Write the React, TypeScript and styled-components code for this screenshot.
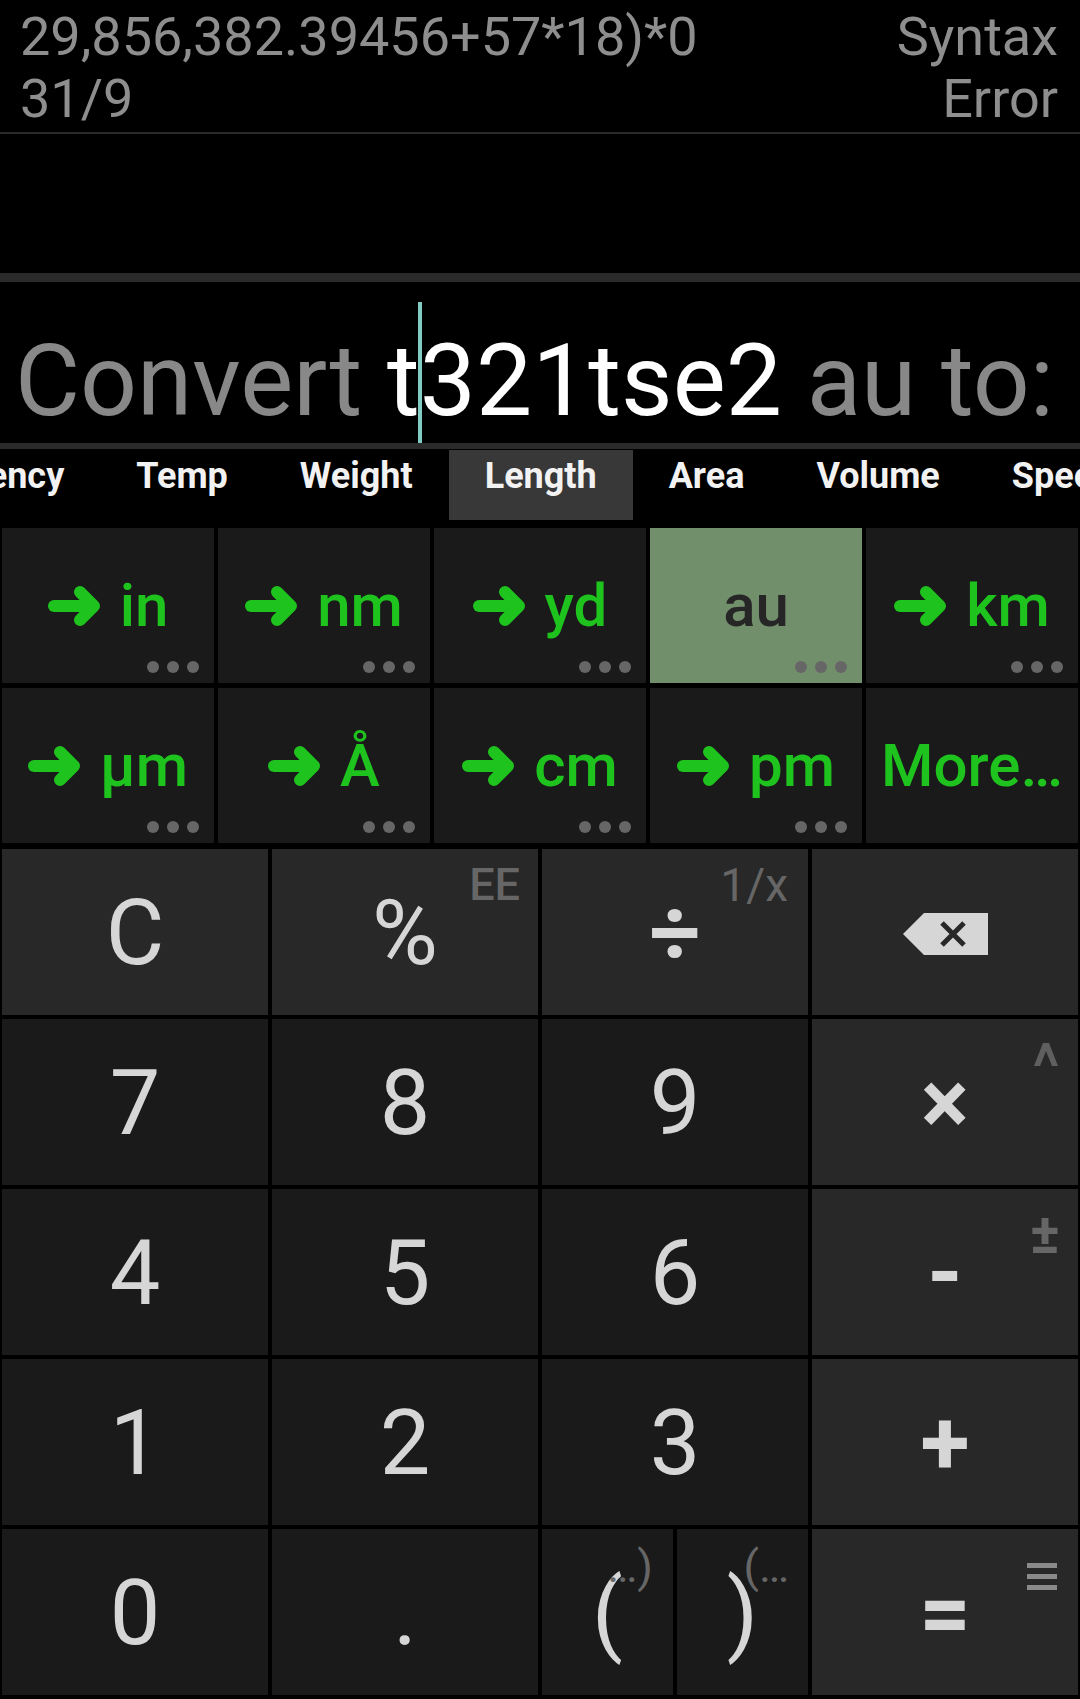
import styled, { createGlobalStyle } from "styled-components";

const GlobalStyle = createGlobalStyle`
  html, body {
    margin: 0;
    background: #000;
  }
  body {
    font-family: Roboto, "Noto Sans", "Liberation Sans", sans-serif;
  }
`;

const Page = styled.div`
  width: 1080px;
  height: 1699px;
  background: #000;
  display: flex;
  flex-direction: column;
  overflow: hidden;
`;

const Display = styled.div`
  height: 132px;
  flex: none;
  box-sizing: border-box;
  padding: 6px 22px 0 20px;
  display: flex;
  justify-content: space-between;
  font-size: 54px;
  line-height: 62px;
  color: #8e8e8e;
  white-space: nowrap;
`;

const ResultText = styled.div`
  text-align: right;
`;

const Rule = styled.div<{ $h: number }>`
  height: ${({ $h }) => $h}px;
  flex: none;
  background: #2a2a2a;
`;

const Blank = styled.div`
  height: 139px;
  flex: none;
`;

const ConvertRow = styled.div`
  height: 161px;
  flex: none;
  box-sizing: border-box;
  padding: 20px 0 0 15px;
  font-size: 100px;
  line-height: 100px;
  color: #888;
  white-space: nowrap;
  overflow: hidden;
`;

const Entered = styled.span`
  color: #fff;
`;

const Caret = styled.span`
  display: inline-block;
  width: 4px;
  height: 141px;
  margin: 0 -2px;
  vertical-align: -28px;
  background: #80cbc4;
`;

const TabStrip = styled.div`
  height: 79px;
  flex: none;
  box-sizing: border-box;
  padding-top: 1px;
  overflow: hidden;
`;

const TabTrack = styled.div`
  display: flex;
  margin-left: -118px;
`;

const Tab = styled.div<{ $active?: boolean }>`
  flex: none;
  height: 70px;
  box-sizing: border-box;
  padding: 6px 36px 0;
  font-size: 36px;
  font-weight: 700;
  line-height: 40px;
  color: #f2f2f2;
  background: ${({ $active }) => ($active ? "#383838" : "transparent")};
`;

const UnitGrid = styled.div`
  flex: none;
  display: grid;
  grid-template-columns: repeat(5, 1fr);
  grid-auto-rows: 155px;
  gap: 5px 4px;
  padding: 0 2px;
`;

const UnitCell = styled.div<{ $selected?: boolean }>`
  position: relative;
  display: flex;
  align-items: center;
  justify-content: center;
  gap: 18px;
  background: ${({ $selected }) => ($selected ? "#728f6c" : "#1a1a1a")};
  color: ${({ $selected }) => ($selected ? "#262626" : "#1ec31e")};
  font-size: 60px;
  font-weight: 500;
  line-height: 1;
`;

const Dots = styled.div`
  position: absolute;
  right: 15px;
  bottom: 10px;
  display: flex;
  gap: 8px;
`;

const Dot = styled.span`
  width: 12px;
  height: 12px;
  border-radius: 50%;
  background: #666;
`;

const Keypad = styled.div`
  flex: none;
  display: grid;
  grid-template-columns: repeat(4, 1fr);
  grid-auto-rows: 166px;
  gap: 4px;
  padding: 0 2px;
  margin-top: 6px;
`;

const Key = styled.div<{ $op?: boolean; $bold?: boolean }>`
  position: relative;
  display: flex;
  align-items: center;
  justify-content: center;
  box-sizing: border-box;
  padding-top: 4px;
  background: ${({ $op }) => ($op ? "#282828" : "#1a1a1a")};
  color: #d6d6d6;
  font-size: 90px;
  font-weight: ${({ $bold }) => ($bold ? 700 : 400)};
  line-height: 1;
`;

const ParenPair = styled.div`
  display: grid;
  grid-template-columns: 1fr 1fr;
  gap: 4px;
`;

const Hint = styled.span<{ $top: number; $right: number; $size?: number; $weight?: number }>`
  position: absolute;
  top: ${({ $top }) => $top}px;
  right: ${({ $right }) => $right}px;
  font-size: ${({ $size }) => $size ?? 45}px;
  font-weight: ${({ $weight }) => $weight ?? 400};
  line-height: 1;
  color: #666;
  display: flex;
`;

const ArrowIcon = () => (
  <svg width="54" height="40" viewBox="0 0 54 40" fill="none" stroke="currentColor" strokeWidth="12" strokeLinecap="round" strokeLinejoin="round">
    <path d="M6 20H44" />
    <path d="M32 6L46 20L32 34" />
  </svg>
);

const BackspaceIcon = () => (
  <svg width="85" height="42" viewBox="0 0 85 42">
    <path d="M21 0H85V42H21L0 21Z" fill="#d6d6d6" />
    <path d="M39 10L61 32M61 10L39 32" stroke="#282828" strokeWidth="5" />
  </svg>
);

const PowerIcon = () => (
  <svg width="24" height="23" viewBox="0 0 24 23">
    <path d="M0 23L9 0H15L24 23H18L12 8L6 23Z" fill="#5f5f5f" />
  </svg>
);

const MenuIcon = () => (
  <svg width="30" height="27" viewBox="0 0 30 27">
    <rect y="0" width="30" height="5" fill="#8a8a8a" />
    <rect y="11" width="30" height="5" fill="#8a8a8a" />
    <rect y="22" width="30" height="5" fill="#8a8a8a" />
  </svg>
);

const tabs = ["Currency", "Temp", "Weight", "Length", "Area", "Volume", "Speed", "Time"];

const units = [
  { label: "in" },
  { label: "nm" },
  { label: "yd" },
  { label: "au", selected: true },
  { label: "km" },
  { label: "µm" },
  { label: "Å" },
  { label: "cm" },
  { label: "pm" },
  { label: "More…", more: true },
];

export default function App() {
  return (
    <Page>
      <GlobalStyle />
      <Display>
        <div>
          <div>29,856,382.39456+57*18)*0</div>
          <div>31/9</div>
        </div>
        <ResultText>
          <div>Syntax</div>
          <div>Error</div>
        </ResultText>
      </Display>
      <Rule $h={2} />
      <Blank />
      <Rule $h={9} />
      <ConvertRow>
        Convert <Entered>t<Caret />321tse2</Entered> au to:
      </ConvertRow>
      <Rule $h={6} />
      <TabStrip>
        <TabTrack>
          {tabs.map(tab => (
            <Tab key={tab} $active={tab === "Length"}>
              {tab}
            </Tab>
          ))}
        </TabTrack>
      </TabStrip>
      <UnitGrid>
        {units.map(unit => (
          <UnitCell key={unit.label} $selected={unit.selected}>
            {!unit.selected && !unit.more && <ArrowIcon />}
            <span>{unit.label}</span>
            {!unit.more && (
              <Dots>
                <Dot />
                <Dot />
                <Dot />
              </Dots>
            )}
          </UnitCell>
        ))}
      </UnitGrid>
      <Keypad>
        <Key $op>C</Key>
        <Key $op>
          %<Hint $top={13} $right={18} $weight={500}>EE</Hint>
        </Key>
        <Key $op $bold>
          ÷<Hint $top={13} $right={20} $size={46}>1/x</Hint>
        </Key>
        <Key $op>
          <BackspaceIcon />
        </Key>

        <Key>7</Key>
        <Key>8</Key>
        <Key>9</Key>
        <Key $op $bold>
          ×
          <Hint $top={24} $right={20}>
            <PowerIcon />
          </Hint>
        </Key>

        <Key>4</Key>
        <Key>5</Key>
        <Key>6</Key>
        <Key $op $bold>
          -<Hint $top={17} $right={18} $size={56} $weight={700}>±</Hint>
        </Key>

        <Key>1</Key>
        <Key>2</Key>
        <Key>3</Key>
        <Key $op $bold>
          +
        </Key>

        <Key>0</Key>
        <Key>.</Key>
        <ParenPair>
          <Key>
            (<Hint $top={15} $right={20}>…)</Hint>
          </Key>
          <Key>
            )<Hint $top={15} $right={19}>(…</Hint>
          </Key>
        </ParenPair>
        <Key $op $bold>
          =
          <Hint $top={34} $right={21}>
            <MenuIcon />
          </Hint>
        </Key>
      </Keypad>
    </Page>
  );
}
